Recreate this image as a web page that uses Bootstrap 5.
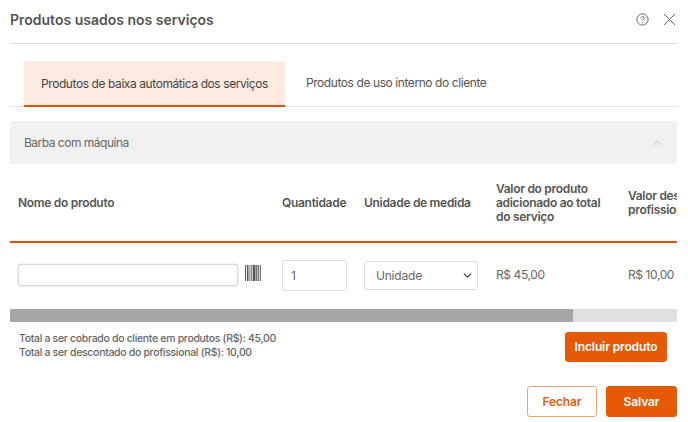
<!DOCTYPE html>
<html lang="pt-BR">
<head>
<meta charset="utf-8">
<title>Produtos usados nos serviços</title>
<link href="https://cdn.jsdelivr.net/npm/bootstrap@5.3.0/dist/css/bootstrap.min.css" rel="stylesheet">
<style>
html,body{height:422px;overflow:hidden}
body{font-family:Inter,"Liberation Sans",sans-serif;color:#555;background:#fff;font-size:12px}
.shell{padding:0 11px 0 10px}
.top-bar{height:44px;border-bottom:1px solid #ddd;padding-bottom:4px}
.top-title{font-size:14px;font-weight:600;color:#555;margin:0;line-height:17px}
.top-icons{gap:14px;padding-right:1px}
.tab-row{margin-top:17px;padding-left:14px;border-bottom:1px solid #e3e3e3;margin-right:-1px;letter-spacing:-.42px}
.tab-item{height:45px;padding:0 17px;font-size:12px;color:#555;display:flex;align-items:center}
.tab-on{background:#fdebe2;color:#444;border-bottom:2px solid #e2500f;margin-bottom:-1px;height:46px;padding-top:2px}
.tab-off{padding:0 21px;padding-bottom:1px}
.fold-head{margin-top:14px;height:43px;background:#f1f1f1;border-radius:3px;padding:0 14px;font-size:12px;color:#666;letter-spacing:-.5px}
.grid-wrap{overflow:hidden;height:145px}
.prod-grid{table-layout:fixed;width:760px;border-collapse:collapse;margin:0}
.prod-grid th{font-size:12px;font-weight:600;line-height:14px;color:#555;padding:11px 8px 10px;height:78px;vertical-align:middle;border-bottom:2px solid #e2500f;letter-spacing:-.3px}
.prod-grid td{padding:0 8px 2px;height:67px;vertical-align:middle;font-size:12px;color:#666;border:0;letter-spacing:-.4px}
.name-box{width:220px;height:22px;border:1px solid #d6d6d6;border-radius:3px;background:#fff;display:block;box-shadow:0 0 2px #ccc;outline:0}
.qty-box{height:31px;width:65px;border:1px solid #ddd;border-radius:3px;padding:0 8px;font-size:12px;color:#666;box-shadow:none}
.unit-box{height:29px;width:114px;border:1px solid #ddd;border-radius:3px;padding:1px 11px 0;font-size:12px;color:#666;background-color:#fff;background-position:right 4px center;background-size:11px 9px;letter-spacing:-.2px}
.name-cell{display:flex;align-items:flex-start;gap:7px;margin-top:-1px}
.code-mark{margin-top:1px}
.scroll-track{height:13px;background:#e0e0e0}
.scroll-thumb{height:13px;width:563px;background:#a6a6a6}
.sum-row{padding:10px 10px 0 9px}
.sum-text{font-size:10.5px;line-height:14px;color:#666;font-weight:500;letter-spacing:-.32px}
.act-btn{background:#e65a07;border:1px solid #e65a07;color:#fff;font-size:12px;font-weight:600;border-radius:3px;padding:0;display:flex;align-items:center;justify-content:center;letter-spacing:-.12px}
.act-btn:hover{background:#e65a07;color:#fff}
.act-add{width:102px;height:30px}
.foot-row{gap:9px;margin-top:24px}
.act-close{width:70px;height:31px;background:#fff;border:1px solid #f0a175;color:#e65a07}
.act-close:hover{background:#fff;color:#e65a07}
.act-save{width:71px;height:31px}
</style>
</head>
<body>
<div class="shell">
  <div class="top-bar d-flex justify-content-between align-items-center">
    <h5 class="top-title">Produtos usados nos serviços</h5>
    <div class="top-icons d-flex align-items-center">
      <svg width="13" height="13" viewBox="0 0 13 13" fill="none" stroke="#666" stroke-width="1"><circle cx="6.5" cy="6.5" r="5.6"/><path d="M4.9 5.2a1.6 1.6 0 1 1 2.5 1.3c-.6.4-.9.7-.9 1.3"/><path d="M6.500 9v.9"/></svg>
      <svg width="13" height="13" viewBox="0 0 13 13" fill="none" stroke="#666" stroke-width="1"><path d="M1 1l11 11M12 1L1 12"/></svg>
    </div>
  </div>
  <div class="tab-row d-flex">
    <div class="tab-item tab-on">Produtos de baixa automática dos serviços</div>
    <div class="tab-item tab-off">Produtos de uso interno do cliente</div>
  </div>
  <div class="fold-head d-flex justify-content-between align-items-center">
    <span>Barba com máquina</span>
    <svg width="11" height="6" viewBox="0 0 11 6" fill="none" stroke="#c4c4c4" stroke-width="1"><path d="M1 5.500l4.500-4.500 4.500 4.500"/></svg>
  </div>
  <div class="grid-wrap">
    <table class="prod-grid">
      <colgroup><col style="width:264px"><col style="width:82px"><col style="width:132px"><col style="width:132px"><col style="width:150px"></colgroup>
      <thead>
        <tr>
          <th>Nome do produto</th>
          <th>Quantidade</th>
          <th>Unidade de medida</th>
          <th>Valor do produto adicionado ao total do serviço</th>
          <th>Valor descontado do profissional</th>
        </tr>
      </thead>
      <tbody>
        <tr>
          <td>
            <div class="name-cell">
              <input class="name-box" type="text" aria-label="Nome do produto">
              <svg class="code-mark" width="16" height="16" viewBox="0 0 16 16" fill="#555"><rect x="0" y="0" width="1" height="16"/><rect x="2" y="0" width="1.500" height="16"/><rect x="4.500" y="0" width=".8" height="16"/><rect x="6.300" y="0" width="1" height="16"/><rect x="8" y="0" width="2.500" height="16"/><rect x="11" y="0" width=".8" height="16"/><rect x="12.600" y="0" width="1.200" height="16"/><rect x="14.800" y="0" width="1" height="16"/></svg>
            </div>
          </td>
          <td><input class="form-control qty-box" type="text" value="1" aria-label="Quantidade"></td>
          <td><select class="form-select unit-box" aria-label="Unidade de medida"><option>Unidade</option></select></td>
          <td>R$ 45,00</td>
          <td>R$ 10,00</td>
        </tr>
      </tbody>
    </table>
  </div>
  <div class="scroll-track"><div class="scroll-thumb"></div></div>
  <div class="sum-row d-flex justify-content-between align-items-start">
    <div class="sum-text">Total a ser cobrado do cliente em produtos (R$): 45,00<br>Total a ser descontado do profissional (R$): 10,00</div>
    <button type="button" class="btn act-btn act-add">Incluir produto</button>
  </div>
  <div class="foot-row d-flex justify-content-end">
    <button type="button" class="btn act-btn act-close">Fechar</button>
    <button type="button" class="btn act-btn act-save">Salvar</button>
  </div>
</div>
<script src="https://cdn.jsdelivr.net/npm/bootstrap@5.3.0/dist/js/bootstrap.bundle.min.js"></script>
</body>
</html>
